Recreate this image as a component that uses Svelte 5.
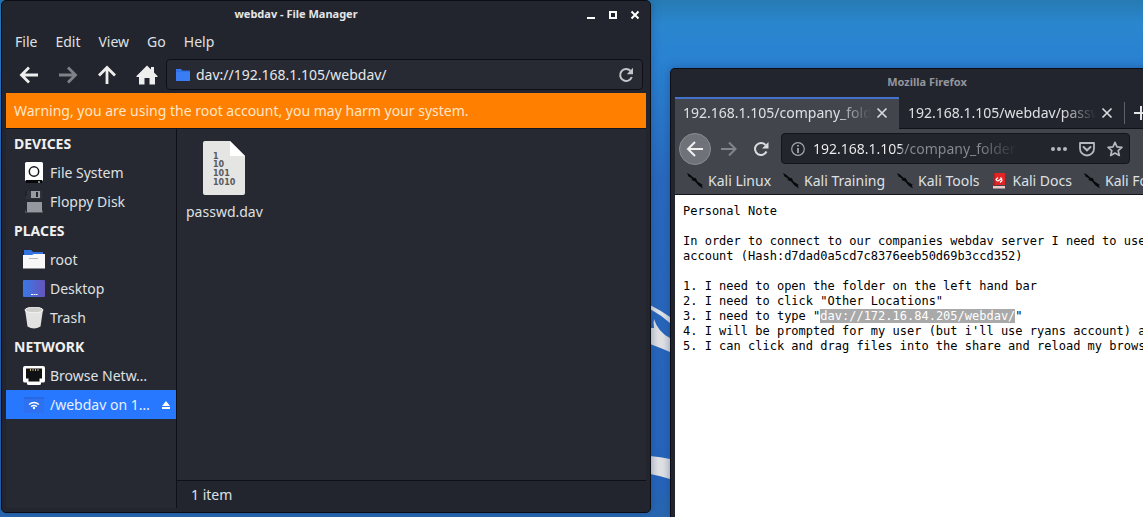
<script>
  const menus = ['File', 'Edit', 'View', 'Go', 'Help'];
  const groups = [
    { title: 'Devices', items: [{ icon: 'drive', label: 'File System' }, { icon: 'floppy', label: 'Floppy Disk' }] },
    { title: 'Places', items: [{ icon: 'folder', label: 'root' }, { icon: 'desktop', label: 'Desktop' }, { icon: 'trash', label: 'Trash' }] },
    { title: 'Network', items: [{ icon: 'network', label: 'Browse Netw…' }, { icon: 'remote', label: '/webdav on 1…', active: true }] }
  ];
  const bookmarks = [
    { label: 'Kali Linux' },
    { label: 'Kali Training' },
    { label: 'Kali Tools' },
    { label: 'Kali Docs', docs: true },
    { label: 'Kali Forums' }
  ];
  const note = [
    'Personal Note',
    '',
    'In order to connect to our companies webdav server I need to use r',
    'account (Hash:d7dad0a5cd7c8376eeb50d69b3ccd352)',
    '',
    '1. I need to open the folder on the left hand bar',
    '2. I need to click "Other Locations"',
    ['3. I need to type "', 'dav://172.16.84.205/webdav/', '"'],
    "4. I will be prompted for my user (but i'll use ryans account) and",
    '5. I can click and drag files into the share and reload my browser'
  ];
  let location = $state('dav://192.168.1.105/webdav/');
  let address = $state('192.168.1.105/company_folders');
</script>

<main class="desktop">
  <svg class="wallpaper" width="40" height="200" viewBox="0 0 40 200" aria-hidden="true">
    <path d="M5 0 Q15 5 25 12 V18 Q16 10 5 4Z" fill="#e3e5e8" />
    <path d="M5 23 H9 Q8 18 9 14 Q13 27 25 33 V47 Q16 43 5 39Z" fill="#e3e3e4" />
    <path d="M5 151 Q16 152 25 154 V174 Q16 171 5 169Z" fill="#e3e3e4" />
  </svg>

  <section class="window files" aria-label="File Manager">
    <header class="titlebar">
      <h1>webdav - File Manager</h1>
      <div class="controls">
        <button aria-label="Minimize"><svg width="10" height="10" viewBox="0 0 10 10"><path d="M1 8h8" stroke="#fff" stroke-width="2" /></svg></button>
        <button aria-label="Maximize"><svg width="10" height="10" viewBox="0 0 10 10"><path d="M2 2h6v6h-6z" fill="none" stroke="#fff" stroke-width="2" /></svg></button>
        <button aria-label="Close"><svg width="10" height="10" viewBox="0 0 10 10"><path d="M1.5 1.5l7 7m0-7l-7 7" stroke="#fff" stroke-width="2" /></svg></button>
      </div>
    </header>
    <nav class="menubar">
      {#each menus as m}<button>{m}</button>{/each}
    </nav>
    <div class="toolbar">
      <button aria-label="Back"><svg width="20" height="20" viewBox="0 0 20 20"><path d="M19 10H3M10 2.500L2.500 10l7.500 7.500" fill="none" stroke="#eee" stroke-width="2.800" /></svg></button>
      <button aria-label="Forward"><svg width="20" height="20" viewBox="0 0 20 20"><path d="M1 10h16M10 2.500L17.500 10 10 17.500" fill="none" stroke="#808289" stroke-width="2.800" /></svg></button>
      <button aria-label="Up"><svg width="20" height="20" viewBox="0 0 20 20"><path d="M10 19V3M2 10.500L10 2.500l8 8" fill="none" stroke="#eee" stroke-width="2.800" /></svg></button>
      <button aria-label="Home"><svg width="22" height="20" viewBox="0 0 22 20"><path d="M11 0.500l4 4V2h3v5.500l3.500 3.500V12H19v7.500h-5.500V13h-5v6.500H3V12H.5v-1z" fill="#eee" /></svg></button>
      <div class="location">
        <svg width="16" height="14" viewBox="0 0 16 14"><path d="M1 1h5l1.500 2H15v10H1z" fill="#3a7cf4" /><path d="M1 3h14" stroke="#2967dc" /></svg>
        <input aria-label="Location" bind:value={location} />
        <button aria-label="Reload"><svg width="16" height="16" viewBox="0 0 16 16"><path d="M13.800 10A6 6 0 1 1 12.500 3.800" fill="none" stroke="#c3c5c9" stroke-width="2" /><path d="M15 .8v6.400H8.800z" fill="#c3c5c9" /></svg></button>
      </div>
    </div>
    <p class="warning">Warning, you are using the root account, you may harm your system.</p>
    <div class="panes">
      <aside>
        {#each groups as g}
          <h2>{g.title}</h2>
          {#each g.items as item}
            <button class="place" class:active={item.active}>
              <svg width="22" height="22" viewBox="0 0 22 22" aria-hidden="true">
                {#if item.icon === 'drive'}
                  <rect x="2" y="0" width="18" height="19" rx="1.500" fill="#fff" />
                  <circle cx="11" cy="9.500" r="4.700" fill="#fff" stroke="#16171b" stroke-width="1.500" />
                  <rect x="3" y="18" width="16" height="3" fill="#08090b" /><path d="M15 20h2" stroke="#fff" />
                {:else if item.icon === 'floppy'}
                  <rect x="3" y="0" width="16" height="8" fill="#2f323a" /><rect x="8" y="0" width="9" height="7" fill="#999ba1" /><rect x="13" y="1" width="2" height="5" fill="#24262d" />
                  <path d="M3 0v5" stroke="#15161b" /><rect x="4" y="11" width="15" height="10" fill="#9698a0" /><path d="M2.500 19.500v2h17v-2" fill="none" stroke="#55585f" />
                {:else if item.icon === 'folder'}
                  <path d="M1 1h7l2 2h10v6H1z" fill="#3273df" /><path d="M0 6h9l2-1h11v14.500H0z" fill="#f8f8f8" /><path d="M6 9.500h9" stroke="#b8b8b8" />
                {:else if item.icon === 'desktop'}
                  <rect y="2" width="22" height="17" rx="1" fill="url(#violet)" /><path d="M8 16.500h2m.500 0h2m.500 0h1.500" stroke="#fff" />
                  <defs><linearGradient id="violet"><stop stop-color="#3979e8" /><stop offset="1" stop-color="#6654bb" /></linearGradient></defs>
                {:else if item.icon === 'trash'}
                  <path d="M2 2.500l2.500 17q6.500 4 13 0l2.500-17z" fill="#e2e2e1" /><ellipse cx="11" cy="3" rx="9" ry="2.800" fill="#cfcfce" stroke="#f4f4f4" />
                {:else if item.icon === 'network'}
                  <path d="M2 1h18q2 0 2 2v13q0 1.500-2 1.500h-2V19q0 1-2 1H6q-2 0-2-1v-1.500H2q-2 0-2-1.500V3q0-2 2-2z" fill="#fff" /><path d="M3 3.500h16v10h-2.500v3h-11v-3H3z" fill="#101112" /><path d="M7.500 4v2m2.500-2v2m2.500-2v2m2.500-2v2" stroke="#c4b36d" />
                {:else}
                  <path d="M1 4V3h7l1.500 1H21v15H1z" fill="#2d70f0" /><path d="M1 4h20" stroke="#2360d4" /><path d="M6 10.500q5-4 10 0M8 12.500q3-2 6 0" fill="none" stroke="#fff" stroke-width="1.300" /><circle cx="11" cy="14" r="1.200" fill="#fff" />
                {/if}
              </svg>
              <span>{item.label}</span>
              {#if item.active}<svg class="eject" width="8" height="8" viewBox="0 0 8 8"><path d="M4 0l4 5H0zM0 6h8v2H0z" fill="#fff" /></svg>{/if}
            </button>
          {/each}
        {/each}
      </aside>
      <div class="content">
        <div class="grid">
          <button class="file">
            <svg width="42" height="54" viewBox="0 0 42 54" aria-hidden="true">
              <path d="M2 0h25l15 15v37q0 2-2 2H2q-2 0-2-2V2q0-2 2-2z" fill="#e5e5e4" /><path d="M27 0l15 15H27z" fill="#fff" />
              <g font-family="DejaVu Sans" font-weight="bold" font-size="8" fill="#5a5a5a"><text x="10" y="18">1</text><text x="10" y="26">10</text><text x="10" y="35">101</text><text x="10" y="44">1010</text></g>
            </svg>
            <span>passwd.dav</span>
          </button>
        </div>
        <footer>1 item</footer>
      </div>
    </div>
  </section>

  <section class="window browser" aria-label="Browser">
    <header class="titlebar"><h1>Mozilla Firefox</h1></header>
    <div class="tabs">
      <div class="tab current"><button class="name">192.168.1.105/company_folders</button><button aria-label="Close tab"><svg width="12" height="12" viewBox="0 0 12 12"><path d="M1.500 1.500l9 9m0-9l-9 9" stroke="#d8d9dc" stroke-width="1.700" /></svg></button></div>
      <div class="tab"><button class="name">192.168.1.105/webdav/passwd.dav</button><button aria-label="Close tab"><svg width="12" height="12" viewBox="0 0 12 12"><path d="M1.500 1.500l9 9m0-9l-9 9" stroke="#d8d9dc" stroke-width="1.700" /></svg></button></div>
      <button class="new" aria-label="New tab"><svg width="14" height="14" viewBox="0 0 14 14"><path d="M7 0v14M0 7h14" stroke="#e4e4e6" stroke-width="2" /></svg></button>
    </div>
    <div class="navbar">
      <button class="round" aria-label="Go back"><svg width="18" height="18" viewBox="0 0 18 18"><path d="M17 9H2.500M9 2L2 9l7 7" fill="none" stroke="#f0f0f1" stroke-width="2" /></svg></button>
      <button aria-label="Go forward"><svg width="18" height="18" viewBox="0 0 18 18"><path d="M1 9h14.500M9 2.500L15.500 9 9 15.500" fill="none" stroke="#83858b" stroke-width="2" /></svg></button>
      <button aria-label="Reload page"><svg width="16" height="16" viewBox="0 0 16 16"><path d="M13.500 10.500A6 6 0 1 1 12.500 4" fill="none" stroke="#dcdde0" stroke-width="2" /><path d="M15.500 1v6.500H9z" fill="#dcdde0" /></svg></button>
      <div class="urlbar">
        <svg width="14" height="14" viewBox="0 0 14 14"><circle cx="7" cy="7" r="6.300" fill="none" stroke="#a5a7ac" stroke-width="1.200" /><path d="M7 6v5M7 3v1.600" stroke="#b4b6ba" stroke-width="1.600" /></svg>
        <input aria-label="Address" bind:value={address} />
        <button aria-label="Page actions"><svg width="16" height="4" viewBox="0 0 16 4"><g fill="#b6b8bd"><circle cx="2" cy="2" r="2" /><circle cx="8" cy="2" r="2" /><circle cx="14" cy="2" r="2" /></g></svg></button>
        <button aria-label="Save to Pocket"><svg width="16" height="16" viewBox="0 0 16 16"><path d="M1 2h14v5.500a7 7 0 0 1-14 0z" fill="none" stroke="#b6b8bd" stroke-width="1.800" stroke-linejoin="round" /><path d="M4.500 6L8 9.300 11.500 6" fill="none" stroke="#b6b8bd" stroke-width="2" stroke-linecap="round" /></svg></button>
        <button aria-label="Bookmark"><svg width="16" height="16" viewBox="0 0 16 16"><path d="M8 1.300l2 4.500 4.900.5-3.700 3.300 1.100 4.900L8 12l-4.300 2.500 1.100-4.900L1.100 6.300 6 5.800z" fill="none" stroke="#b6b8bd" stroke-width="1.700" stroke-linejoin="round" /></svg></button>
      </div>
    </div>
    <nav class="bookmarks">
      {#each bookmarks as b}
        <a href="#top">
          {#if b.docs}
            <svg width="16" height="16" viewBox="0 0 16 16"><path d="M3 0h11v12H3q-1 0-1 1z" fill="#e22424" /><path d="M2 2q0-2 2-2v13H2z" fill="#b91a1c" /><path d="M2 13h12v2.500H2z" fill="#ecc8c8" /><path d="M7 4.500L5 6.500Q6.500 9 8.500 7T11 7.500L9 9.500M9.500 4.500l1.500 1.500" fill="none" stroke="#fff" stroke-width="1.200" /></svg>
          {:else}
            <svg width="16" height="16" viewBox="0 0 16 16"><path d="M0 0l3 1.500 3.500 3.200 2.200.3 1.800 3.500 5.500 3.500-1.300.2 1.300 3.300-4.500-3-3.300-4L4.500 7 5 5.500 1.500 3.500z" fill="#08090a" /></svg>
          {/if}
          {b.label}
        </a>
      {/each}
    </nav>
    <div class="note">
      {#each note as line}
        {#if Array.isArray(line)}
          <p>{line[0]}<mark>{line[1]}</mark>{line[2]}</p>
        {:else}
          <p>{line}</p>
        {/if}
      {/each}
    </div>
  </section>
</main>

<style>
  :global(body) { margin: 0; }
  * { box-sizing: border-box; }
  .desktop {
    position: relative;
    min-height: 100vh;
    overflow: hidden;
    font: 14px/20px "Noto Sans", sans-serif;
    color: #dfe0e3;
    background: linear-gradient(180deg, #277bb3 0, #2a86ce 24px, #2a82d2 60px, #2969bd 180px, #2764bb 480px, #2868af 100%);
  }
  button { border: 0; padding: 0; background: none; color: inherit; font: inherit; }
  input { min-width: 0; flex: 1; border: 0; padding: 0; background: none; color: #e6e7e9; font: inherit; outline: 0; }
  svg { display: block; flex: none; }
  h1, h2, p { margin: 0; }
  .wallpaper { position: absolute; left: 645px; top: 305px; }
  .window { position: absolute; display: flex; flex-direction: column; background: #23252e; border: 1px solid #0d0e15; border-radius: 5px; overflow: hidden; }
  .files { inset: 0 492px 4px 1px; padding: 0 4px 4px; box-shadow: 0 0 10px #163f8080; }
  .browser { inset: 68px -41px 0 670px; padding: 0 4px; border-bottom: 0; border-radius: 5px 5px 0 0; box-shadow: 0 0 10px #163f8080; }
  .titlebar { flex: none; display: flex; align-items: center; height: 27px; }
  .titlebar h1 { flex: 1; padding-bottom: 2px; text-align: center; font-size: 11px; font-weight: 700; color: #e4e5e7; }
  .browser .titlebar { height: 28px; }
  .browser h1 { color: #94969c; }
  .controls { display: flex; gap: 12px; padding-right: 6px; }
  .menubar { display: flex; gap: 18px; padding: 4px 9px; }
  .toolbar { display: flex; align-items: center; gap: 19px; padding: 3px 3px 3px 13px; }
  .location { flex: 1; display: flex; align-items: center; gap: 5px; height: 31px; margin-left: -11px; padding: 0 8px; border: 1px solid #0f1017; border-radius: 4px; background: #272a33; }
  .warning { flex: none; padding: 8px; height: 35px; background: #ff7f00; color: #ffe6c8; }
  .panes { flex: 1; min-height: 0; display: flex; border-top: 1px solid #14151d; background: #272932; }
  aside { width: 171px; border-right: 1px solid #0f1017; }
  h2 { padding: 0 8px; font-size: 14px; font-weight: 700; line-height: 29px; text-transform: uppercase; color: #f0f0f1; }
  .place { display: flex; align-items: center; gap: 5px; width: 100%; height: 29px; padding: 0 6px 0 17px; text-align: left; white-space: nowrap; }
  .active { background: #2777ff; color: #e8f0ff; }
  .eject { margin-left: auto; }
  .content { flex: 1; display: flex; flex-direction: column; }
  .grid { flex: 1; padding: 12px 9px; }
  .file { display: flex; flex-direction: column; align-items: center; gap: 7px; }
  footer { padding: 4px 14px 3px; background: #23252e; border-top: 1px solid #0f1017; }
  .tabs { flex: none; display: flex; height: 32px; }
  .tab { flex: none; display: flex; align-items: center; width: 225px; padding: 0 11px 0 9px; border-bottom: 1px solid #111219; }
  .tab:first-child { width: 224px; padding-left: 8px; }
  .current { border-top: 2px solid #4472ca; border-bottom: 0; padding-bottom: 2px; background: #42454c; }
  .name { flex: 1; min-width: 0; margin-right: 5px; overflow: hidden; white-space: nowrap; text-align: left; mask-image: linear-gradient(90deg, #000 calc(100% - 34px), transparent); }
  .new { flex: 1; padding-left: 10px; border-bottom: 1px solid #111219; background: linear-gradient(#5f6168, #5f6168) 0 5px / 1px 22px no-repeat; }
  .navbar { flex: none; display: flex; align-items: center; gap: 15px; height: 39px; padding: 1px 49px 1px 4px; background: #42454c; }
  .round { display: grid; place-items: center; width: 32px; height: 32px; margin-right: -6px; border: 1px solid #8a8c91; border-radius: 50%; background: #707279; }
  .urlbar { flex: 1; display: flex; align-items: center; gap: 12px; height: 31px; margin-left: -3px; padding: 0 6px 0 9px; border: 1px solid #14151b; border-radius: 4px; background: #23252d; }
  .urlbar input { margin-left: -4px; background: linear-gradient(90deg, #f1f1f2 88px, #898b91 89px, #898b91 165px, transparent 205px); background-clip: text; color: transparent; }
  .bookmarks { flex: none; display: flex; gap: 12px; height: 27px; padding: 0 12px 1px; background: #42454c; border-bottom: 1px solid #14151b; }
  .bookmarks a { display: flex; align-items: center; gap: 5px; color: inherit; text-decoration: none; white-space: nowrap; }
  .note { flex: 1; padding: 9px 8px; background: #fff; color: #000; font: 12px/15px "DejaVu Sans Mono", monospace; }
  .note p { min-height: 15px; white-space: pre; }
  mark { background: #a9a9a9; color: #fff; }
</style>
